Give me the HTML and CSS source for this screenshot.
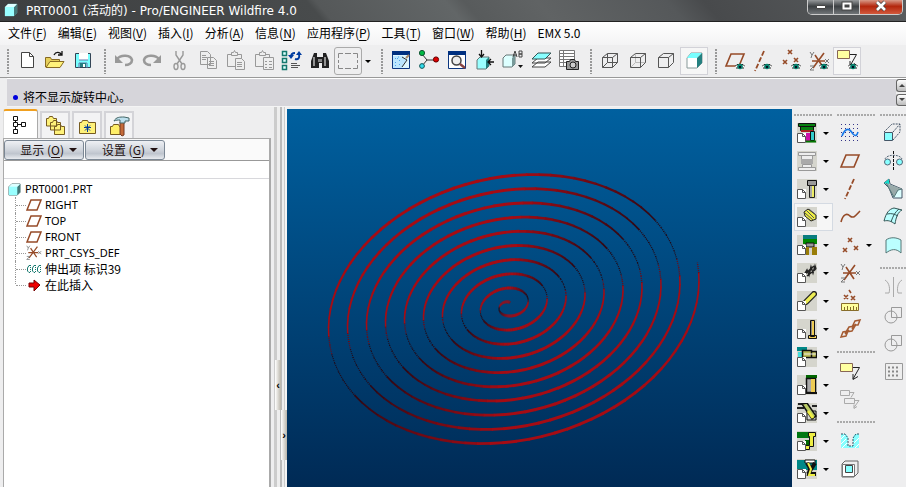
FILE: index.html
```html
<!DOCTYPE html>
<html lang="zh-CN">
<head>
<meta charset="utf-8">
<meta name="viewport" content="width=device-width, initial-scale=1">
<title>PRT0001 (活动的) - Pro/ENGINEER Wildfire 4.0</title>
<link rel="stylesheet" href="styles.css">
</head>
<body>
<svg class="defs" aria-hidden="true">
  <symbol id="eye" viewBox="0 0 10 7"><path d="M0 3.500 2.500 1h5L10 3.500 7.500 6h-5z" fill="#fff"/><path d="M0 3.500 2 1.500h6l2 2M1 5h2M7 5h2" stroke="#222" fill="none"/><circle cx="5" cy="3.500" r="2.800" fill="#08806c"/><path d="M4 3h2v2H4z" fill="#012"/></symbol>
  <symbol id="page" viewBox="0 0 9 10"><path d="M.5.5h5l3 3v6h-8z" fill="#fff" stroke="#555"/><path d="M5.500.5v3h3" fill="none" stroke="#555"/></symbol>
  <symbol id="cube" viewBox="0 0 14 14"><path d="M1 4l3-3h9v9l-3 3H1z" fill="#8ff" stroke="#577"/><path d="M1 4h9v9H1z" fill="#9ff"/><path d="M10 4l3-3v9l-3 3z" fill="#477"/><path d="M1 4l3-3h9l-3 3z" fill="#dff"/></symbol>
  <symbol id="plane" viewBox="0 0 24 24"><path d="M8 6h13l-5 12H3z" fill="none" stroke="#964b28" stroke-width="1.600"/></symbol>
  <symbol id="axis" viewBox="0 0 24 24"><path d="M16 2 7 22" stroke="#964b28" stroke-width="1.800" stroke-dasharray="5 2"/></symbol>
  <symbol id="points" viewBox="0 0 24 24"><path d="M9 3l4 4m0-4-4 4M4 13l4 4m0-4-4 4M15 11l4 4m0-4-4 4" stroke="#964b28" stroke-width="1.600"/></symbol>
  <symbol id="csys" viewBox="0 0 24 24"><path d="M5 12h13M6 19 17 4M8 6l8 12" stroke="#964b28" stroke-width="1.600" fill="none"/><path d="m3 3 2 3 2-3M5 6l-1 3M18 10l4 4m0-4-4 4M3 17h4l-4 4h4" stroke="#777" fill="none"/></symbol>
  <symbol id="note" viewBox="0 0 24 24"><path d="M2.500 4.500h12v8h-12z" fill="#ffffa0" stroke="#865"/><path d="M15 8.500h6.500L15 20m0-5v5.500l5-3" fill="none" stroke="#222"/></symbol>
</svg>
<div class="app">
  <header class="titlebar">
    <svg class="i14" viewBox="0 0 14 14"><use href="#cube"/></svg>
    <h1>PRT0001 (活动的) - Pro/ENGINEER Wildfire 4.0</h1>
    <div class="winbtns">
      <button aria-label="最小化"><svg viewBox="0 0 14 12"><path d="M2.500 5.500h9v3h-9z" fill="#fff" stroke="#444"/></svg></button>
      <button aria-label="最大化"><svg viewBox="0 0 14 12"><path d="M3.500 3.500h7v5h-7z" fill="none" stroke="#444" stroke-width="4"/><path d="M3.500 3.500h7v5h-7z" fill="none" stroke="#fff" stroke-width="2"/></svg></button>
      <button class="close" aria-label="关闭"><svg viewBox="0 0 14 12"><path d="m3 2 8 8m0-8-8 8" stroke="#444" stroke-width="4"/><path d="m3 2 8 8m0-8-8 8" stroke="#fff" stroke-width="2.600"/></svg></button>
    </div>
  </header>
  <nav class="menubar">
    <button>文件(<u>F</u>)</button><button>编辑(<u>E</u>)</button><button>视图(<u>V</u>)</button><button>插入(<u>I</u>)</button><button>分析(<u>A</u>)</button><button>信息(<u>N</u>)</button><button>应用程序(<u>P</u>)</button><button>工具(<u>T</u>)</button><button>窗口(<u>W</u>)</button><button>帮助(<u>H</u>)</button><button>EMX 5.0</button>
  </nav>
  <div class="toolbar" role="toolbar">
    <span class="grip"></span>
    <button aria-label="新建"><svg viewBox="0 0 24 24"><path d="M6.500 3.500h8l4 4v11h-12z" fill="#fff" stroke="#444"/><path d="M14.500 3.500v4h4" fill="none" stroke="#444"/></svg></button>
    <button aria-label="打开"><svg viewBox="0 0 24 24"><path d="M2.500 18V8.500h5l1 2h8V18" fill="#e6cf5a" stroke="#876a22"/><path d="m3 18.500 4-6h14l-4 6z" fill="#fff27a" stroke="#876a22"/><path d="M11 6c2-4 6-3 8 0m-4 0h4V2" fill="none" stroke="#111" stroke-width="1.300"/></svg></button>
    <button aria-label="保存"><svg viewBox="0 0 24 24"><path d="M4.500 4.500h15v14h-15z" fill="#7ff" stroke="#345"/><path d="M8 4h9v7H8z" fill="#fff"/><path d="M8 11h9M8 19v-5h8v5" fill="none" stroke="#67a"/><path d="M9 14h6v4H9z" fill="#257c80"/><path d="M12 15h2v3h-2z" fill="#fff"/></svg></button>
    <span class="grip"></span>
    <button aria-label="撤消"><svg viewBox="0 0 24 24"><path d="M5 10c4-5 14-4 15 1 0 3-3 5-7 5" fill="none" stroke="#999" stroke-width="2.600"/><path d="M3 6v8h8z" fill="#999"/></svg></button>
    <button aria-label="重做"><svg viewBox="0 0 24 24"><path d="M19 10C15 5 5 6 4 11c0 3 3 5 7 5" fill="none" stroke="#999" stroke-width="2.600"/><path d="M21 6v8h-8z" fill="#999"/></svg></button>
    <button aria-label="剪切"><svg viewBox="0 0 24 24" fill="none" stroke="#999" stroke-width="1.400"><path d="M8 2v4l6 9M15 2v4L9 15"/><ellipse cx="8" cy="17.500" rx="2" ry="3"/><ellipse cx="15" cy="17.500" rx="2" ry="3"/></svg></button>
    <button aria-label="复制"><svg viewBox="0 0 24 24" fill="#eee" stroke="#999"><path d="M4.500 2.500h7l3 3v10h-10zM11.500 8.500h6l3 3v8h-9z"/><path d="M6 6.500h4M6 8.500h5M6 10.500h4M13 12.500h5M13 14.500h5M13 16.500h5" fill="none"/></svg></button>
    <button aria-label="粘贴"><svg viewBox="0 0 24 24" fill="#eee" stroke="#999"><path d="M3.500 5.500h14v12h-14z"/><path d="M7.500 6.500v-3h2l1-2 1 2h2v3zM11.500 9.500h6l3 3v8h-9z"/><path d="M13 13.500h5M13 15.500h5M13 17.500h5" fill="none"/></svg></button>
    <button aria-label="选择性粘贴"><svg viewBox="0 0 24 24" fill="#eee" stroke="#999"><path d="M3.500 5.500h14v12h-14z"/><path d="M7.500 6.500v-3h2l1-2 1 2h2v3zM11.500 8.500h10v12h-10z"/><path d="M13 12.500h2M13 15.500h2M13 18.500h2M17 12.500h3M17 15.500h3M17 18.500h3" fill="none"/></svg></button>
    <button aria-label="再生"><svg viewBox="0 0 24 24"><path d="M2.500 2.500h4v4h-4zM2.500 9.500h4v4h-4zM2.500 16.500h4v4h-4z" fill="#dff" stroke="#15786e" stroke-width="1.500"/><path d="M11 8c0-3 1-4 4-4m4 2c1 3-1 5-4 4" fill="none" stroke="#003ca0" stroke-width="2"/><path d="M8 6h6l-3 4zM16 6h6l-3-4z" fill="#003ca0"/><path d="M11 14.500h6M11 16.500h9M11 18.500h7" stroke="#555"/></svg></button>
    <button aria-label="查找"><svg viewBox="0 0 24 24"><path d="M6 4h3v4h6V4h3l3 8v7h-7v-5h-3v5H3v-7z" fill="#222"/><path d="M6 8v9M17 8v9" stroke="#bbb" stroke-width="1.500"/><path d="M10 10h4v3h-4z" fill="#888"/></svg></button>
    <button class="framed" aria-label="选择框"><svg viewBox="0 0 24 24"><path d="M2.500 9V4.500H7m2 0h6m2 0h4.500V9m0 2v3m0 2v3.500H17m-2 0H9m-2 0H2.500V16m0-2v-3" fill="none" stroke="#888"/></svg></button>
    <button class="drop" aria-label="选择选项"></button>
    <span class="grip"></span>
    <button aria-label="重画"><svg viewBox="0 0 24 24"><path d="M3.500 3.500h17v16h-17z" fill="#dff7ff" stroke="#0c3680"/><path d="M3 2h18v4H3z" fill="#003080"/><path d="M6 9.500h3m1 2h2m-6 2h2m2 2h2m-6 1h2M9 8h1" stroke="#28d" stroke-dasharray="1 1"/><path d="M4 7h9l5 4-5 8H4z" fill="#8cf" opacity=".4"/><path d="m13 8 5 3-5 7" fill="none" stroke="#333"/><path d="m17 9 3-3" stroke="#a86" stroke-width="2"/></svg></button>
    <button aria-label="旋转中心"><svg viewBox="0 0 24 24"><path d="M5 5l5 6h9m-9 0-5 6" fill="none" stroke="#333"/><circle cx="5" cy="4" r="2.600" fill="#0b4" stroke="#153"/><circle cx="19" cy="10.500" r="2.600" fill="#d00" stroke="#600"/><circle cx="5" cy="17" r="2.400" fill="#3de" stroke="#155"/></svg></button>
    <button aria-label="缩放"><svg viewBox="0 0 24 24"><path d="M3.500 3.500h17v16h-17z" fill="#fff" stroke="#0c3680"/><path d="M3 2h18v4H3z" fill="#003080"/><circle cx="11.500" cy="11.500" r="4.500" fill="#eee" stroke="#444" stroke-width="1.500"/><path d="m15 15 5 4" stroke="#844" stroke-width="2.500"/></svg></button>
    <button aria-label="重新调整"><svg viewBox="0 0 24 24"><path d="m4 11 3-3h9v9l-3 3H4z" fill="#9ff" stroke="#677"/><path d="m13 11 3-3v9l-3 3z" fill="#248080"/><path d="M8.500 1v7M6 5l2.500 3L11 5M21 13h-6m3-3-3 3 3 3" fill="none" stroke="#111" stroke-width="1.300"/></svg></button>
    <button aria-label="已命名视图"><svg viewBox="0 0 24 24"><path d="m2 9 3-3h9v9l-3 3H2z" fill="#dff" stroke="#677"/><path d="m11 9 3-3v9l-3 3z" fill="#799"/><path d="m12 8 2-6 2 6m-4-2h4m2-4v6h3V5h-3 3V2h-3" fill="none" stroke="#444"/><path d="M17 16h5l-2.500 3z" fill="#111"/></svg></button>
    <button aria-label="层"><svg viewBox="0 0 24 24"><path d="m3 18 6-5h13l-6 5zM3 14l6-5h13l-6 5z" fill="#fff" stroke="#444"/><path d="m3 10 6-6h13l-6 6z" fill="#8ff" stroke="#355"/></svg></button>
    <button aria-label="视图管理器"><svg viewBox="0 0 24 24"><path d="M2.500 1.500h15v16h-15zM2 4.500h15M2 7.500h15M2 10.500h15M2 13.500h15M6.500 2v15" fill="#fff" stroke="#777"/><path d="M9.500 12.500h3l1-2h4l1 2h3v8h-12z" fill="#999" stroke="#222"/><circle cx="16" cy="16" r="3" fill="#ccc" stroke="#222"/></svg></button>
    <span class="grip"></span>
    <button aria-label="线框"><svg viewBox="0 0 24 24" fill="none" stroke="#555"><path d="M4.500 8.500h10v10h-10zM9.500 4.500h10v9h-10zM4.500 8.500l5-4m5 4 5-4m-15 14 5-5m5 5 5-5"/></svg></button>
    <button aria-label="隐藏线"><svg viewBox="0 0 24 24" fill="none" stroke="#555"><path d="M9.500 5v8.500H20M5 18l4.500-4.500" stroke="#bbb"/><path d="M4.500 8.500h10v10h-10zM4.500 8.500l5-4h10v9l-5 5m0-10 5-4"/></svg></button>
    <button aria-label="无隐藏线"><svg viewBox="0 0 24 24" fill="none" stroke="#555"><path d="M4.500 8.500h10v10h-10zM4.500 8.500l5-4h10v9l-5 5m0-10 5-4"/></svg></button>
    <button class="pressed" aria-label="着色"><svg viewBox="0 0 24 24"><path d="m5 9 4-5h11v10l-5 5H5z" fill="#fff" stroke="#899"/><path d="m5 9 4-5h11l-5 5z" fill="#7ff"/><path d="m15 9 5-5v10l-5 5z" fill="#248080"/></svg></button>
    <span class="grip"></span>
    <button aria-label="平面显示"><svg viewBox="0 0 24 24"><use href="#plane" y="-1"/><use href="#eye" x="12" y="14" width="10" height="7"/></svg></button>
    <button aria-label="轴显示"><svg viewBox="0 0 24 24"><use href="#axis" x="-3"/><use href="#eye" x="11" y="14" width="10" height="7"/></svg></button>
    <button aria-label="点显示"><svg viewBox="0 0 24 24"><use href="#points" y="-2"/><use href="#eye" x="12" y="14" width="10" height="7"/></svg></button>
    <button aria-label="坐标系显示"><svg viewBox="0 0 24 24"><use href="#csys"/><use href="#eye" x="12" y="14" width="10" height="7"/></svg></button>
    <button class="pressed" aria-label="注释显示"><svg viewBox="0 0 24 24"><use href="#note" y="-3"/><use href="#eye" x="13" y="14" width="10" height="7"/></svg></button>
  </div>
  <div class="message">
    <p><i></i>将不显示旋转中心。</p>
    <div class="spin"><button aria-label="向上"></button><button class="down" aria-label="向下"></button></div>
  </div>
  <main>
    <aside class="navigator">
      <div class="tabs" role="tablist">
        <button class="active" role="tab" aria-label="模型树"><svg viewBox="0 0 24 24" fill="#fff" stroke="#111"><path d="M6.500 7v12M7 11.500h8" /><path d="M4.500 3.500h4v4h-4zM4.500 9.500h4v4h-4zM4.500 16.500h4v4h-4zM12.500 9.500h4v4h-4z"/></svg></button>
        <button role="tab" aria-label="文件夹"><svg viewBox="0 0 24 24" fill="#fff27a" stroke="#765b20"><path d="M3.500 12V4.500h2l1-2h3l1 2h3V12zM7.500 16V8.500h2l1-2h3l1 2h3V16zM11.500 20.500v-8h2l1-2h3l1 2h3v8z"/></svg></button>
        <button role="tab" aria-label="收藏夹"><svg viewBox="0 0 24 24"><path d="M4.500 19.500V8.500h2l1-2h5l1 2h7v11z" fill="#fff27a" stroke="#765b20"/><path d="M12.500 10v8M9 13.500h7m-6-2 5 5m0-5-5 5" stroke="#003b9b"/></svg></button>
        <button role="tab" aria-label="连接"><svg viewBox="0 0 24 24"><path d="M3.500 20.500v-8h2l1-2h5l1 2h3v8z" fill="#ffef68" stroke="#765b20"/><path d="M13 8h4v13l-2 1-2-2z" fill="#c46a39" stroke="#743b22"/><path d="M7 7c2-4 6-4 10-4l5 1v3h-4v2h-5V6c-2 0-4 0-6 1z" fill="#bde0ee" stroke="#466"/></svg></button>
      </div>
      <div class="panel">
        <div class="panel-actions"><button><span>显示 (<u>O</u>)</span></button><button><span>设置 (<u>G</u>)</span></button></div>
        <input class="filter" aria-label="模型树筛选">
        <ul class="tree">
          <li class="root"><svg viewBox="0 0 14 14"><use href="#cube"/></svg>PRT0001.PRT</li>
          <li><svg viewBox="0 0 16 16"><path d="M5 3h10l-4 10H1z" fill="none" stroke="#964b28" stroke-width="1.500"/></svg>RIGHT</li>
          <li><svg viewBox="0 0 16 16"><path d="M5 3h10l-4 10H1z" fill="none" stroke="#964b28" stroke-width="1.500"/></svg>TOP</li>
          <li><svg viewBox="0 0 16 16"><path d="M5 3h10l-4 10H1z" fill="none" stroke="#964b28" stroke-width="1.500"/></svg>FRONT</li>
          <li><svg viewBox="2 2 21 21"><use href="#csys" width="24" height="24"/></svg>PRT_CSYS_DEF</li>
          <li class="cjk"><svg viewBox="0 0 16 16"><path d="M4.500 4v8M9.500 4v8M14.500 4v8" stroke="#16796f" stroke-dasharray="1 1"/><path d="M5 4.500H3L1.500 7v3L3 11.500h1M10 4.500H8L6.500 7v3L8 11.500h1M15 4.500h-2L11.500 7v3l1.500 1.500h1" fill="none" stroke="#16796f"/></svg>伸出项 标识39</li>
          <li class="cjk"><svg viewBox="0 0 16 16"><path d="M3 6h5V3l6 5-6 6v-4H3z" fill="#e00" stroke="#700"/></svg>在此插入</li>
        </ul>
      </div>
    </aside>
    <div class="splitter"><button aria-label="收起导航器">‹</button><button class="out" aria-label="展开浏览器">›</button></div>
    <section class="viewport" aria-label="图形窗口"><svg id="model" viewBox="0 0 505 378" preserveAspectRatio="xMidYMid meet"></svg></section>
    <aside class="tools">
      <div class="column" id="mold"></div>
      <div class="column">
        <span class="rule"></span>
        <button aria-label="草绘"><svg viewBox="0 0 24 24"><path d="M3 3.500h18M3 7.500h18M3 11.500h18M3 15.500h18M3 19.500h18" stroke="#338" stroke-dasharray="1 3"/><path d="M4 15c4-10 8-7 11-2 3 3 4 1 5-2" fill="none" stroke="#1678e8" stroke-width="1.600"/></svg></button>
        <button aria-label="平面"><svg viewBox="0 0 24 24"><use href="#plane"/></svg></button>
        <button aria-label="轴"><svg viewBox="0 0 24 24"><use href="#axis"/></svg></button>
        <button aria-label="曲线"><svg viewBox="0 0 24 24"><path d="M3 17c2-8 6-9 9-6 4 3 6-1 10-5" fill="none" stroke="#964b28" stroke-width="1.600"/></svg></button>
        <div class="pair"><button aria-label="点"><svg viewBox="0 0 24 24"><use href="#points" x="1" y="2"/></svg></button><button class="drop" aria-label="点类型"></button></div>
        <button aria-label="坐标系"><svg viewBox="0 0 24 24"><use href="#csys"/></svg></button>
        <button aria-label="分析点"><svg viewBox="0 0 24 24"><path d="m6 6 4 4m0-4-4 4m7-3 4 4m0-4-4 4M11 1l2 3" stroke="#964b28" stroke-width="1.600"/><path d="M3.500 14.500h17v7h-17z" fill="#ffff9c" stroke="#876d2b"/><path d="M6.500 18v3m3-4v4m3-3v3m3-4v4m3-3v3" stroke="#876d2b"/></svg></button>
        <button aria-label="参照"><svg viewBox="0 0 24 24" fill="none" stroke="#a45b32" stroke-width="1.500"><path d="m3 20 2-5 5-1-2 5zM8 15l3-5 6-1-3 5zM15 8l2-4 5-1-2 5zM7 17l4-4m3-1 4-5"/></svg></button>
        <span class="rule"></span>
        <button aria-label="注释"><svg viewBox="0 0 24 24"><use href="#note"/></svg></button>
        <button aria-label="注释特征"><svg viewBox="0 0 24 24" fill="none" stroke="#aaa"><path d="M2.500 3.500h9v5h-9zM6.500 11.500h10v5h-10zM12 5.500h4l-3 5M17 13.500h4l-5 7m0-3v4l3-2"/></svg></button>
        <span class="rule"></span>
        <button aria-label="孔"><svg viewBox="0 0 24 24"><path d="M3 5h5l2 3v9h5V8l2-3h4v14H3z" fill="#8ff"/><path d="m3 10 5-5M3 15l5-5M4 19l6-6m5 2 6-6m-4 10 4-4" stroke="#fff"/><path d="M3 5h4l3 4v8h5V9l3-4h3" fill="none" stroke="#356" stroke-dasharray="2 1"/></svg></button>
        <button aria-label="壳"><svg viewBox="0 0 24 24"><path d="m4 7 3-3h13v12l-4 4H4z" fill="#eee" stroke="#666"/><path d="M4.500 7.500h12v12h-12z" fill="#fff" stroke="#777"/><path d="M7.500 8.500h7v7h-7z" fill="#8ff" stroke="#444"/></svg></button>
        <button aria-label="筋"><svg viewBox="0 0 24 24"><path d="m12 4 7 7-7 7-7-7z" fill="#8ff" stroke="#555"/></svg></button>
      </div>
      <div class="column">
        <span class="rule"></span>
        <button aria-label="拉伸"><svg viewBox="0 0 24 24" fill="none" stroke="#456"><path d="M3.500 11.500h8v8h-8z" fill="#8ff"/><path d="m3 11 8-8h8v8l-7 8m0-8 7-8" stroke-dasharray="2 1"/></svg></button>
        <button aria-label="旋转"><svg viewBox="0 0 24 24" fill="#8ff" stroke="#567"><path d="M12.500 2v20" stroke="#111" stroke-dasharray="3 1"/><circle cx="6.500" cy="13" r="3"/><circle cx="18.500" cy="13" r="3"/><path d="M4 10c2-5 15-5 17 0" fill="none" stroke-dasharray="2 1"/></svg></button>
        <button aria-label="扫描混合"><svg viewBox="0 0 24 24"><path d="m3 6 5-4 1 5 12 5v9h-9L8 11z" fill="#dff" stroke="#456"/><path d="m3 6 5-4v6z" fill="#1dc"/><path d="m5 6 8 14 4-7 4-1" fill="#9aa" stroke="#577"/></svg></button>
        <button aria-label="边界混合"><svg viewBox="0 0 24 24"><path d="M3 16C5 8 8 4 13 3l8 2c-4 2-6 7-7 14-4-3-7-4-11-3z" fill="#bff" stroke="#355"/><path d="M6 9c5-1 7 0 11 2M10 17c2-6 4-10 8-13" fill="none" stroke="#355"/></svg></button>
        <button aria-label="填充"><svg viewBox="0 0 24 24"><path d="M5 7c4-3 10-3 15 0v13c-5-5-10-4-15 0z" fill="#bff" stroke="#577"/></svg></button>
        <span class="rule"></span>
        <button aria-label="镜像"><svg viewBox="0 0 24 24" fill="none" stroke="#aaa"><path d="M12.500 2v20M4 5c5 3 5 10 4 13H4m17-13c-5 3-5 10-4 13h4"/></svg></button>
        <button aria-label="合并"><svg viewBox="0 0 24 24" fill="none" stroke="#999"><circle cx="10" cy="14" r="6"/><path d="M10.500 4.500h10v10h-10z"/></svg></button>
        <button aria-label="修剪"><svg viewBox="0 0 24 24" fill="none" stroke="#999"><circle cx="10" cy="14" r="6"/><path d="M10.500 4.500h10v10h-10z"/></svg></button>
        <button aria-label="阵列"><svg viewBox="0 0 24 24"><path d="M4.500 4.500h17v16h-17z" fill="#eee" stroke="#999"/><path d="M7 8.500h12M7 12.500h12M7 16.500h12" stroke="#888" stroke-width="2" stroke-dasharray="2 2"/></svg></button>
      </div>
    </aside>
  </main>
</div>
<script src="app.js"></script>
</body>
</html>
```
FILE: styles.css
```css
* { box-sizing: border-box; }
body { margin: 0; background: #eeeeef; color: #000; font: 12px/16px "Noto Sans CJK SC", sans-serif; }
button { font: inherit; color: inherit; border: 0; padding: 0; margin: 0; background: none; }
u { text-underline-offset: 2px; }
.defs { position: absolute; width: 0; height: 0; }
.app { display: flex; flex-direction: column; height: 100vh; overflow: hidden; }

.titlebar { flex: none; height: 22px; display: flex; align-items: flex-start; padding-left: 4px; gap: 8px; color: #fff; border-bottom: 1px solid #222;
  background: linear-gradient(50deg, #3d3f40 0%, #484b4c 35%, #555859 36%, #626667 50%, #585b5c 52%, #606364 60%, #55585a 74%, #484a4c 78%, #595c5e 100%); }
.i14 { width: 14px; height: 14px; margin-top: 3px; }
h1 { margin: 2px 0 0; font: 12px/18px "DejaVu Sans", "Noto Sans CJK SC", sans-serif; white-space: nowrap; }
.winbtns { margin-left: auto; margin-right: 3px; display: flex; height: 15px; border: 1px solid #ccc; border-top: 0; border-radius: 0 0 5px 5px; overflow: hidden; }
.winbtns button { width: 26px; display: flex; justify-content: center; background: linear-gradient(#96999b, #3d4144 45%, #717578); border-right: 1px solid #ccc; }
.winbtns .close { width: 42px; border: 0; background: linear-gradient(#d89a88, #b3260d 45%, #d2593c); }
.winbtns svg { width: 14px; height: 12px; }

.menubar { flex: none; height: 23px; display: flex; gap: 11px; padding: 0 8px 2px; align-items: center; background: linear-gradient(#fff, #f3f3f4); white-space: nowrap; }

.toolbar { flex: none; height: 33px; display: flex; align-items: center; border-bottom: 1px solid #999; background: #eeeeef; }
.toolbar > button { flex: none; width: 28px; height: 28px; display: flex; align-items: center; justify-content: center; }
.toolbar svg, .column svg { flex: none; width: 24px; height: 24px; }
.toolbar .grip { flex: none; width: 13px; height: 25px; background: repeating-linear-gradient(#999 0 2px, transparent 2px 3px) 7px 0 / 2px 100% no-repeat; }
.toolbar .framed { border: 1px solid #aaa; border-radius: 3px; }
.pressed { background: #f6f6f6; border: 1px solid #d2d2d8; }
.toolbar .drop { width: 12px; }
.drop::before { content: ""; border: 3px solid transparent; border-top-color: #000; border-bottom: 0; }

.message { flex: none; height: 29px; margin-left: 7px; display: flex; justify-content: space-between; background: #d6d5da; border-top: 1px solid #fff; border-bottom: 1px solid #f4f4f4; }
.message p { margin: 9px 0 0 6px; display: flex; align-items: center; gap: 5px; line-height: 16px; }
.message i { width: 5px; height: 5px; border-radius: 50%; background: #00d; }
.spin { width: 10px; display: flex; flex-direction: column; gap: 2px; background: #eee; }
.spin button { flex: 1; border: 1px solid #666; border-right: 0; border-radius: 3px 0 0 3px; display: flex; align-items: center; justify-content: center; background: linear-gradient(#fff, #bbb); }
.spin button::before { content: ""; border: 3px solid transparent; border-bottom-color: #444; border-top: 0; }
.spin .down::before { border-top: 3px solid #444; border-bottom: 0; }

main { flex: 1; min-height: 0; display: flex; }
.navigator { flex: none; width: 275px; padding: 2px 3px 0; display: flex; flex-direction: column; border-right: 1px solid #ccc; }
.tabs { flex: none; display: flex; align-items: flex-end; gap: 2px; height: 29px; }
.tabs button { width: 30px; height: 27px; display: flex; justify-content: center; align-items: center; border: 2px solid #d4d4d8; border-bottom: 0; background: #f3f3f4; }
.tabs .active { width: 35px; height: 29px; border: 1px solid #aaa; border-left-color: #ddd; border-top: 2px solid #f0a020; border-bottom: 0; border-radius: 3px 3px 0 0; background: #fff; }
.tabs svg { flex: none; width: 24px; height: 24px; }
.panel { flex: 1; min-height: 0; display: flex; flex-direction: column; border: 1px solid #aaa; border-right-width: 2px; border-bottom: 0; background: #fff; }
.panel-actions { flex: none; display: flex; gap: 1px; height: 22px; padding-top: 1px; background: #fafafa; border-bottom: 1px solid #999; }
.panel-actions button { width: 80px; height: 20px; display: flex; align-items: center; justify-content: flex-end; gap: 5px; padding-right: 6px; color: #211; border: 1px solid #7b8794; border-radius: 3px; background: linear-gradient(#eef0f4, #d0d5dc 50%, #bfc5ce 70%, #e8ebef); }
.panel-actions button::after { content: ""; border: 4px solid transparent; border-top-color: #211; border-bottom: 0; }
.filter { flex: none; height: 18px; width: 100%; padding: 0 3px; border: 0; border-bottom: 1px solid #d8d8dc; outline: 0; background: #fff; }
.tree { list-style: none; margin: 0; padding: 2px 0 0 4px; }
.tree li { display: flex; align-items: center; height: 16px; gap: 3px; padding-left: 6px; margin-left: 7px; font: 11px/16px "Noto Sans", sans-serif; border-left: 1px dotted #999; }
.tree li:not(.root)::before { content: ""; width: 10px; margin: 0 -3px 0 -6px; border-top: 1px dotted #999; }
.tree .root { margin: 0; padding: 0; gap: 4px; border: 0; }
.tree .cjk { font: 12px/16px "Noto Sans CJK SC", sans-serif; }
.tree svg { width: 16px; height: 16px; }
.tree .root svg { width: 13px; height: 13px; }
.tree li:last-child { border-left-color: transparent; background: repeating-linear-gradient(#999 0 1px, transparent 1px 2px) 0 0 / 1px 8px no-repeat border-box; }

.splitter { flex: none; width: 12px; padding-top: 253px; background: linear-gradient(90deg, #ccc 0 2px, #eee 2px 5px, #bbb 5px 7px, #eee 7px 9px, #ccc 9px 10px, #f4f4f4 10px); }
.splitter button { display: block; width: 6px; height: 50px; font: bold 11px/48px "Liberation Sans", sans-serif; background: linear-gradient(90deg, #fff, #b9b5aa); }
.splitter .out { margin-left: 6px; }

.viewport { flex: 1; min-width: 0; margin-top: 2px; background: linear-gradient(#00609f, #002a55); }
.viewport svg { display: block; width: 100%; height: 100%; }
.tools { flex: none; width: 114px; padding-left: 2px; display: flex; overflow: hidden; }
.column { flex: none; width: 43px; }
.column button { width: 26px; height: 28px; display: flex; align-items: center; justify-content: center; }
.column .drop { width: 11px; }
.pair { display: flex; width: 39px; }
.pair.hot { background: #f6f6f6; outline: 1px solid #d4dae2; outline-offset: -1px; }
.rule { display: block; width: 38px; height: 14px; background: repeating-linear-gradient(90deg, #aaa 0 2px, transparent 2px 3px) 0 8px / 100% 2px no-repeat; }
.rule:first-child { height: 12px; background-position: 0 7px; }
#mold svg { width: 20px; height: 20px; background: #d5d5cd; }
```
FILE: app.js
```js
const NS = "http://www.w3.org/2000/svg";

// Flat coil: radius grows linearly with the number of turns and is seen at an angle.
const model = document.getElementById("model");
const point = (turn) => {
  const a = turn * 2 * Math.PI;
  return [222 + 19 * turn * Math.cos(a), 196.5 - 14.2 * turn * Math.sin(a + 0.16)];
};
const step = 1 / 90;
for (let t = 0.2; t < 10.02; t += step) {
  const half = ((t % 1) * 360) % 180;
  const [x1, y1] = point(t);
  const [x2, y2] = point(t + step * 1.1);
  const line = document.createElementNS(NS, "line");
  line.setAttribute("x1", x1.toFixed(2));
  line.setAttribute("y1", y1.toFixed(2));
  line.setAttribute("x2", x2.toFixed(2));
  line.setAttribute("y2", y2.toFixed(2));
  const shade = half > 8 && half < 95 ? Math.min(1, Math.max(0, (half - 25) / 60)) : half < 8 ? 0.6 : 1;
  line.setAttribute("stroke", `rgb(${Math.round(35 + 130 * shade)},${Math.round(8 + 4 * shade)},20)`);
  line.setAttribute("stroke-width", (1 + 2 * Math.abs(Math.sin((half - 14) * Math.PI / 180))).toFixed(2));
  if (half > 2 && half < 28) line.setAttribute("stroke-dasharray", "1 1");
  model.append(line);
}

// Mold component buttons: each drawing sits behind a small page badge.
const mold = [
  ["模架", '<path d="M1.500.5h17v3h-17zM3.500 3.500h13v4h-13z" fill="#078010" stroke="#111"/><path d="M4 7h12v2H4z" fill="#a22"/><path d="M9 10h5v8H9z" fill="#c1a"/><path d="M13.500 8.500h4v9h-4z" fill="#3cc" stroke="#111"/><path d="M9 18.500h10" stroke="#070" stroke-width="2"/>'],
  ["模架定义", '<path d="M1.500 1.500h17v3h-17zM4.500 4.500h11v4h-11zM5.500 13.500h9v3h-9zM1.500 16.500h17v3h-17z" fill="#eee" stroke="#999"/><path d="M4 8h12v5H4z" fill="#aaa"/>'],
  ["螺钉", '<path d="M10.500 1.500h9v5h-9z" fill="#999" stroke="#111"/><path d="M12.500 6.500h5v12h-5z" fill="#ee6" stroke="#222"/><path d="M13 7h2v11h-2z" fill="#aaa"/>'],
  ["销", '<path d="m7 5 4-3 8 6v4l-5 2-6-5z" fill="#ee4" stroke="#222"/><path d="m9 3 8 8M8 6l8 7M12 2l7 6" stroke="#555"/>'],
  ["定位环", '<path d="M6 0h14v5H6z" fill="#087c80"/><path d="M6 4h14v5H6z" fill="#080"/><path d="M9 8h8v4H9z" fill="#999" stroke="#111"/><path d="M8 12h4v8H8zM15 12h5v8h-5z" fill="#997d08"/>'],
  ["弹簧", '<path d="m7 12 3-5 2 5 2-8 2 6 2-7 1 3M8 11l9-8M10 13l9-7" fill="none" stroke="#222" stroke-width="1.500"/>'],
  ["斜顶", '<path d="M9 11 17 3" stroke="#222" stroke-width="6" stroke-linecap="round"/><path d="m9 11 8-8" stroke="#ee5" stroke-width="3.500" stroke-linecap="round"/>'],
  ["顶杆", '<path d="M13.500 1.500h4v16h-4zM11.500 16.500h8v3h-8z" fill="#ec5" stroke="#111"/><path d="M14 2h1v14h-1z" fill="#888"/>'],
  ["水嘴", '<path d="M0 0h10v4H0z" fill="#088"/><path d="M1 5h5v5H1z" fill="#4dd"/><path d="M5.500 3.500h9v7h-9zM14.500 4.500h5v6h-5z" fill="#bb5" stroke="#111" stroke-width="1.500"/><path d="M7 7h12" stroke="#eee"/>'],
  ["导柱", '<path d="M9 0h11v3H9z" fill="#060"/><path d="M9.500 3.500h9v14h-9z" fill="#aaa" stroke="#111" stroke-width="1.500"/><path d="M14 4h4v13h-4z" fill="#ec5"/><path d="M8 18h12" stroke="#111" stroke-width="2"/>'],
  ["滑块", '<path d="M1 1h5M0 5h7m8-2h5" stroke="#222" stroke-width="2"/><path d="M10 8h9v9h-9z" fill="none" stroke="#111"/><path d="m5 1 5-1 9 13-4 3z" fill="#bc6" stroke="#111" stroke-width="1.500"/><path d="m11 8 5 7" stroke="#ee4" stroke-width="3"/>'],
  ["锁模块", '<path d="M0 1h13v6H0z" fill="#071"/><path d="M8 9h5v6H8z" fill="#060"/><path d="M11.500 1.500h7v4h-2v10h-4v3h-4v-4h4v-9h-1z" fill="#ee4" stroke="#111"/>'],
  ["顶出机构", '<path d="M0 1h20v10H0z" fill="#088"/><path d="M8 1h10v3H8z" fill="#fff" stroke="#111"/><path d="m10 4 3 5-1 6h7M18 4l-7 11" fill="none" stroke="#111" stroke-width="4"/><path d="m11 4 3 6-2 6h6" fill="none" stroke="#ee4" stroke-width="2"/>']
];
const column = document.getElementById("mold");
column.innerHTML = '<span class="rule"></span>' + mold.map(([name, art], i) =>
  `<div class="pair${i === 3 ? " hot" : ""}"><button aria-label="${name}"><svg viewBox="0 0 20 20">${art}${i === 1 ? "" : '<path d="M0 10h9v10H0z" fill="#fff"/><use href="#page" x="0" y="10" width="9" height="10"/>'}</svg></button><button class="drop" aria-label="${name}选项"></button></div>`
).join("");
```
